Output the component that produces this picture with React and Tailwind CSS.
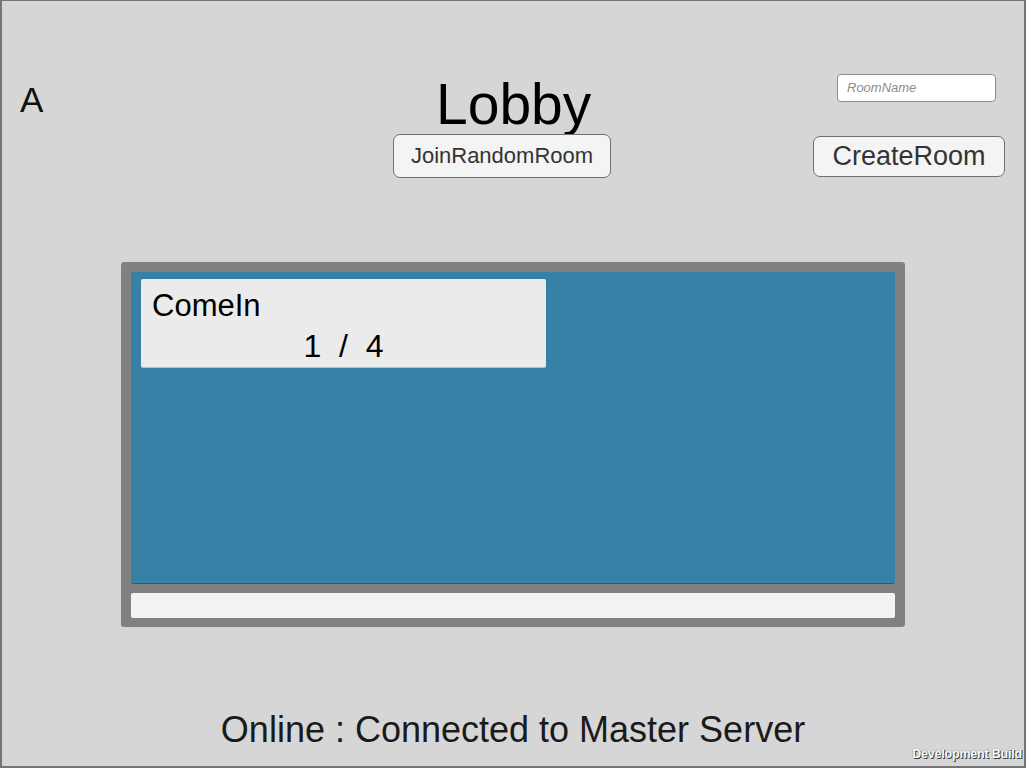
export default function App() {
  const font = { fontFamily: '"Liberation Sans", Arial, sans-serif' };
  return (
    <div
      className="relative w-[1026px] h-[768px] overflow-hidden bg-[#d6d6d6] border-l-2 border-r-2 border-t border-b-2 border-[#747474] flex flex-col text-[#111]"
      style={font}
    >
      {/* header: player name, title + random join, room creation */}
      <div className="flex items-start h-[261px] shrink-0">
        <div className="w-[391px] pl-[18px] pt-[81px] text-[35px] leading-none">A</div>
        <div className="w-[218px] flex flex-col pt-[75px]">
          <div className="ml-[43px] text-[57px] leading-none text-black">Lobby</div>
          <button className="mt-[1px] w-[218px] h-[44px] rounded-[7px] bg-[#f4f4f4] border border-[#707070] text-[22px] text-[#333] leading-none flex items-center justify-center">
            JoinRandomRoom
          </button>
        </div>
        <div className="flex flex-col pt-[73px]">
          <div className="ml-[226px] w-[159px] h-[28px] rounded-[4px] bg-white border border-[#8a8a8a] flex items-center pl-[9px] text-[13px] italic text-[#8c8c8c]">
            RoomName
          </div>
          <button className="mt-[34px] ml-[202px] w-[192px] h-[41px] rounded-[7px] bg-[#f4f4f4] border border-[#707070] text-[27px] text-[#333] leading-none flex items-center justify-center">
            CreateRoom
          </button>
        </div>
      </div>

      {/* room list panel */}
      <div className="ml-[119px] w-[784px] h-[365px] shrink-0 rounded-[3px] bg-[#818181] p-[10px] pb-[9px] flex flex-col gap-[9px]">
        <div className="flex-1 rounded-[3px] bg-[#3780a6] border-b border-[#2c5a74] px-[10px] pt-[7px]">
          <div className="w-[405px] h-[89px] rounded-[2px] bg-[#ebebeb] border-b border-[#bcbcbc] flex flex-col">
            <div className="pl-[11px] pt-[11px] text-[31px] leading-none text-black">ComeIn</div>
            <div className="mt-[9px] text-center text-[32px] leading-none text-black whitespace-pre">1  /  4</div>
          </div>
        </div>
        <div className="h-[25px] shrink-0 rounded-[2px] bg-[#f3f3f3]"></div>
      </div>

      {/* connection status */}
      <div className="mt-[85px] text-center text-[36px] leading-none text-[#1a1a1a]">
        Online : Connected to Master Server
      </div>

      <div
        className="absolute right-[2px] bottom-[6px] text-[12.5px] font-bold text-white leading-none tracking-[-0.2px]"
        style={{ textShadow: '1px 1px 0 #3a3a3a, 0 0 1px #444' }}
      >
        Development Build
      </div>
    </div>
  );
}
